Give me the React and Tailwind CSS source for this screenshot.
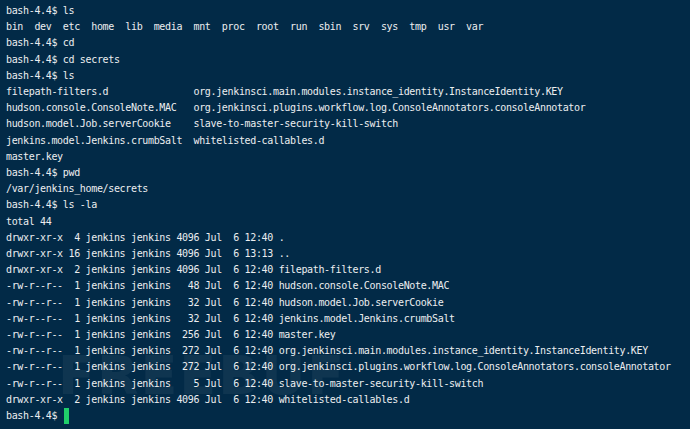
const lines = [
  "bash-4.4$ ls",
  "bin  dev  etc  home  lib  media  mnt  proc  root  run  sbin  srv  sys  tmp  usr  var",
  "bash-4.4$ cd",
  "bash-4.4$ cd secrets",
  "bash-4.4$ ls",
  "filepath-filters.d               org.jenkinsci.main.modules.instance_identity.InstanceIdentity.KEY",
  "hudson.console.ConsoleNote.MAC   org.jenkinsci.plugins.workflow.log.ConsoleAnnotators.consoleAnnotator",
  "hudson.model.Job.serverCookie    slave-to-master-security-kill-switch",
  "jenkins.model.Jenkins.crumbSalt  whitelisted-callables.d",
  "master.key",
  "bash-4.4$ pwd",
  "/var/jenkins_home/secrets",
  "bash-4.4$ ls -la",
  "total 44",
  "drwxr-xr-x  4 jenkins jenkins 4096 Jul  6 12:40 .",
  "drwxr-xr-x 16 jenkins jenkins 4096 Jul  6 13:13 ..",
  "drwxr-xr-x  2 jenkins jenkins 4096 Jul  6 12:40 filepath-filters.d",
  "-rw-r--r--  1 jenkins jenkins   48 Jul  6 12:40 hudson.console.ConsoleNote.MAC",
  "-rw-r--r--  1 jenkins jenkins   32 Jul  6 12:40 hudson.model.Job.serverCookie",
  "-rw-r--r--  1 jenkins jenkins   32 Jul  6 12:40 jenkins.model.Jenkins.crumbSalt",
  "-rw-r--r--  1 jenkins jenkins  256 Jul  6 12:40 master.key",
  "-rw-r--r--  1 jenkins jenkins  272 Jul  6 12:40 org.jenkinsci.main.modules.instance_identity.InstanceIdentity.KEY",
  "-rw-r--r--  1 jenkins jenkins  272 Jul  6 12:40 org.jenkinsci.plugins.workflow.log.ConsoleAnnotators.consoleAnnotator",
  "-rw-r--r--  1 jenkins jenkins    5 Jul  6 12:40 slave-to-master-security-kill-switch",
  "drwxr-xr-x  2 jenkins jenkins 4096 Jul  6 12:40 whitelisted-callables.d",
];

export default function App() {
  return (
    <div className="relative w-[690px] h-[429px] overflow-hidden bg-[#022a47] text-[#eceef0] pl-[6px] pt-[3px] font-['DejaVu_Sans_Mono','Liberation_Mono',monospace] text-[10px] tracking-[-0.34px] leading-[16.2px]">
      {/* faint watermark */}
      <div className="absolute left-[58px] top-[368px] text-[54px] font-black tracking-[2px] text-white/[0.05] font-['DejaVu_Sans',sans-serif] select-none">
        FREEBUF
      </div>
      {lines.map((line, i) => (
        <div key={i} className="whitespace-pre">
          {line}
        </div>
      ))}
      <div className="flex items-center whitespace-pre">
        <span>bash-4.4$ </span>
        <span className="inline-block w-[5px] h-[16px] ml-[1px] bg-[#20cf6a]"></span>
      </div>
    </div>
  );
}
